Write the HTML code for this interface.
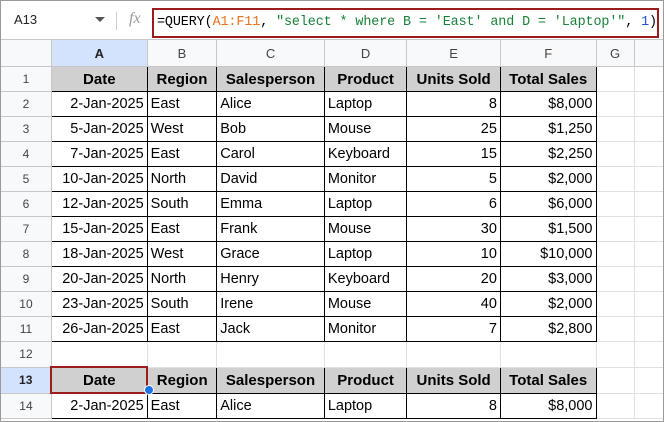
<!DOCTYPE html><html><head><style>
body{margin:0;width:664px;height:422px;overflow:hidden;background:#fff;font-family:"Liberation Sans",sans-serif;position:relative}
.frame{position:absolute;left:0;top:0;width:662px;height:420px;border:1px solid #9a9a9a}
.fb{position:absolute;left:0;top:0;width:664px;height:39px;border-bottom:1px solid #c7c7c7;background:#fff}
.nb{position:absolute;left:14px;top:12px;font-size:13px;color:#222}
.dd{position:absolute;left:95px;top:17px;width:0;height:0;border-left:5px solid transparent;border-right:5px solid transparent;border-top:5px solid #555}
.sep{position:absolute;left:116px;top:12px;width:1px;height:18px;background:#ccc}
.fx{position:absolute;left:129px;top:10px;font-style:italic;font-family:"Liberation Serif",serif;color:#999;font-size:16px}
.fbox{position:absolute;left:152px;top:8px;width:500px;height:26px;border:2px solid #9b1c1c;font-family:"Liberation Mono",monospace;font-size:13.4px;line-height:26px;padding-left:3px;white-space:nowrap;letter-spacing:-0.1px}
table{position:absolute;left:0;top:39px;border-collapse:collapse;table-layout:fixed}
td{height:24px;border:1px solid #e0e0e0;font-size:14.5px;padding:0 3px;white-space:nowrap;overflow:hidden}
tr.ch td{height:26px;background:#f8f9fa;text-align:center;color:#444;font-size:13px;border-color:#c7c7c7}
td.rh{background:#f8f9fa;text-align:center;color:#444;font-size:12px;border-color:#c7c7c7}
td.h{background:#d0d0d0;font-weight:bold;text-align:center;font-size:15px;border:1px solid #000}
td.d{border:1px solid #000}
.r{text-align:right}
</style></head><body>
<div class="fb"><span class="nb">A13</span><div class="dd"></div><div class="sep"></div><span class="fx">fx</span>
<div class="fbox">=QUERY(<span style="color:#e8711a">A1:F11</span>, <span style="color:#188038">"select * where B = 'East' and D = 'Laptop'"</span>, <span style="color:#1a56d6">1</span>)</div></div>
<table>
<colgroup><col style="width:52px"><col style="width:96px"><col style="width:70px"><col style="width:108px"><col style="width:83px"><col style="width:94px"><col style="width:96px"><col style="width:39px"><col style="width:30px"></colgroup>
<tr class="ch"><td></td><td style="background:#d3e3fd;color:#222;font-weight:bold">A</td><td>B</td><td>C</td><td>D</td><td>E</td><td>F</td><td>G</td><td></td></tr>
<tr><td class="rh">1</td><td class="h">Date</td><td class="h">Region</td><td class="h">Salesperson</td><td class="h">Product</td><td class="h">Units Sold</td><td class="h">Total Sales</td><td></td><td></td></tr>
<tr><td class="rh">2</td><td class="d r">2-Jan-2025</td><td class="d">East</td><td class="d">Alice</td><td class="d">Laptop</td><td class="d r">8</td><td class="d r">$8,000</td><td></td><td></td></tr>
<tr><td class="rh">3</td><td class="d r">5-Jan-2025</td><td class="d">West</td><td class="d">Bob</td><td class="d">Mouse</td><td class="d r">25</td><td class="d r">$1,250</td><td></td><td></td></tr>
<tr><td class="rh">4</td><td class="d r">7-Jan-2025</td><td class="d">East</td><td class="d">Carol</td><td class="d">Keyboard</td><td class="d r">15</td><td class="d r">$2,250</td><td></td><td></td></tr>
<tr><td class="rh">5</td><td class="d r">10-Jan-2025</td><td class="d">North</td><td class="d">David</td><td class="d">Monitor</td><td class="d r">5</td><td class="d r">$2,000</td><td></td><td></td></tr>
<tr><td class="rh">6</td><td class="d r">12-Jan-2025</td><td class="d">South</td><td class="d">Emma</td><td class="d">Laptop</td><td class="d r">6</td><td class="d r">$6,000</td><td></td><td></td></tr>
<tr><td class="rh">7</td><td class="d r">15-Jan-2025</td><td class="d">East</td><td class="d">Frank</td><td class="d">Mouse</td><td class="d r">30</td><td class="d r">$1,500</td><td></td><td></td></tr>
<tr><td class="rh">8</td><td class="d r">18-Jan-2025</td><td class="d">West</td><td class="d">Grace</td><td class="d">Laptop</td><td class="d r">10</td><td class="d r">$10,000</td><td></td><td></td></tr>
<tr><td class="rh">9</td><td class="d r">20-Jan-2025</td><td class="d">North</td><td class="d">Henry</td><td class="d">Keyboard</td><td class="d r">20</td><td class="d r">$3,000</td><td></td><td></td></tr>
<tr><td class="rh">10</td><td class="d r">23-Jan-2025</td><td class="d">South</td><td class="d">Irene</td><td class="d">Mouse</td><td class="d r">40</td><td class="d r">$2,000</td><td></td><td></td></tr>
<tr><td class="rh">11</td><td class="d r">26-Jan-2025</td><td class="d">East</td><td class="d">Jack</td><td class="d">Monitor</td><td class="d r">7</td><td class="d r">$2,800</td><td></td><td></td></tr>
<tr><td class="rh">12</td><td></td><td></td><td></td><td></td><td></td><td></td><td></td><td></td></tr>
<tr><td class="rh" style="background:#d3e3fd;color:#222;font-weight:bold">13</td><td class="h" style="border:2px solid #9b1c1c">Date</td><td class="h">Region</td><td class="h">Salesperson</td><td class="h">Product</td><td class="h">Units Sold</td><td class="h">Total Sales</td><td></td><td></td></tr>
<tr><td class="rh">14</td><td class="d r">2-Jan-2025</td><td class="d">East</td><td class="d">Alice</td><td class="d">Laptop</td><td class="d r">8</td><td class="d r">$8,000</td><td></td><td></td></tr>
</table>
<div style="position:absolute;left:144px;top:385px;width:8px;height:8px;border-radius:50%;background:#1a73e8;border:1px solid #fff"></div>
<div class="frame"></div>
</body></html>
